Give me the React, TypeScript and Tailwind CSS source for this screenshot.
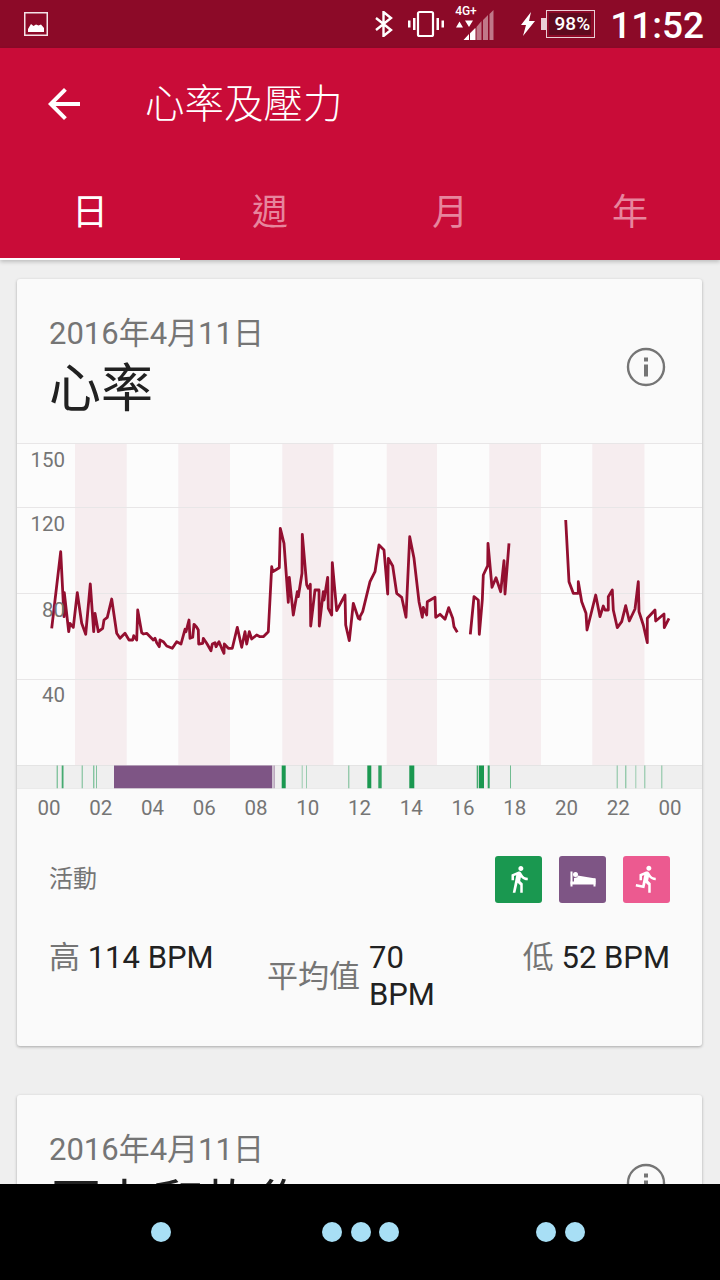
import React from "react";

const FONT = "font-['Roboto','Noto_Sans_CJK_TC',sans-serif]";

const left: number[][] = [[155,565],[182,335],[192,530],[193,458],[206,575],[210,550],[220,562],[232,458],[245,550],[257,583],[271,432],[281,575],[285,520],[295,575],[308,565],[312,540],[322,532],[335,477],[350,580],[360,595],[375,580],[387,600],[398,600],[401,587],[410,600],[413,510],[425,578],[430,582],[440,580],[460,600],[465,595],[470,608],[478,620],[480,600],[490,605],[500,618],[517,625],[530,605],[543,612],[555,568],[558,575],[567,540],[570,595],[578,592],[582,553],[590,562],[595,570],[596,612],[608,610],[610,595],[620,610],[633,632],[637,612],[645,608],[648,620],[657,605],[665,625],[672,640],[673,612],[685,625],[697,625],[712,562],[725,622],[735,575],[740,612],[748,575],[755,597],[770,585],[780,590],[790,590],[805,575],[815,380],[818,395],[838,383],[841,265],[852,310],[865,487],[868,412],[880,525],[892,455],[895,470],[906,400],[907,283],[920,435],[925,445],[931,433],[932,558],[945,450],[957,450],[958,558],[970,455],[972,480],[983,412],[985,505],[995,525],[997,368],[1010,512],[1035,465],[1037,555],[1048,602],[1060,490],[1075,535],[1080,538]];
const right1: number[][] = [[0,350],[8,335],[30,245],[45,215],[57,135],[72,150],[83,282],[85,175],[98,198],[110,280],[125,292],[138,352],[149,110],[162,175],[177,305],[187,352],[190,322],[200,345],[202,305],[225,292],[227,352],[240,343],[255,358],[266,323],[278,355],[282,380],[292,397]];
const right2: number[][] = [[331,403],[342,290],[355,300],[358,403],[367,300],[370,225],[383,197],[384,130],[396,262],[408,233],[422,275],[432,182],[435,282],[447,130]];
const right3: number[][] = [[617,60],[627,245],[640,280],[655,280],[655,245],[665,305],[678,340],[681,390],[707,285],[720,350],[730,318],[735,330],[745,330],[745,290],[757,270],[760,330],[772,383],[785,365],[797,317],[808,363],[825,327],[835,245],[837,335],[850,375],[862,428],[862,355],[885,330],[887,363],[912,342],[913,383],[927,355]];

// traced points are in zoomed reference coordinates; chart svg origin is (17,443)
const toL = (p: number[]) => `${(p[0] / 3 - 17).toFixed(1)},${(440 + p[1] / 3 - 443).toFixed(1)}`;
const toR = (p: number[]) => `${(360 + p[0] / 3 - 17).toFixed(1)},${(500 + p[1] / 3 - 443).toFixed(1)}`;
const series = [
  [...left.map(toL), ...right1.map(toR)].join(" "),
  right2.map(toR).join(" "),
  right3.map(toR).join(" "),
];

const bands = [[75, 126.7], [178.3, 230], [282.3, 333.5], [386.7, 437], [489.3, 541], [592.3, 644.5]];
const grid = [0.5, 64.5, 150.5, 236.5];

const strip: { x: number; w: number; c: string; o?: number }[] = [
  { x: 56.7, w: 1, c: "#1a9850", o: 0.7 },
  { x: 61.7, w: 1.8, c: "#1a9850", o: 0.8 },
  { x: 81.7, w: 1, c: "#1a9850", o: 0.6 },
  { x: 93.3, w: 1, c: "#1a9850", o: 0.7 },
  { x: 96, w: 1, c: "#1a9850", o: 0.5 },
  { x: 114, w: 158.3, c: "#7e5585" },
  { x: 273.3, w: 1.7, c: "#7e5585", o: 0.45 },
  { x: 281.7, w: 4, c: "#1a9850" },
  { x: 301.7, w: 1, c: "#1a9850", o: 0.4 },
  { x: 306, w: 1, c: "#1a9850", o: 0.4 },
  { x: 348.3, w: 1, c: "#1a9850", o: 0.6 },
  { x: 367.3, w: 4, c: "#1a9850" },
  { x: 378.3, w: 3.4, c: "#1a9850", o: 0.9 },
  { x: 409.3, w: 5, c: "#1a9850" },
  { x: 476.7, w: 1.6, c: "#1a9850", o: 0.8 },
  { x: 479, w: 5, c: "#1a9850" },
  { x: 487.7, w: 2, c: "#1a9850", o: 0.9 },
  { x: 510, w: 1, c: "#1a9850", o: 0.6 },
  { x: 616.7, w: 1, c: "#1a9850", o: 0.5 },
  { x: 625.3, w: 1, c: "#1a9850", o: 0.6 },
  { x: 635.3, w: 1, c: "#1a9850", o: 0.4 },
  { x: 644.3, w: 1, c: "#1a9850", o: 0.5 },
  { x: 661.3, w: 1, c: "#1a9850", o: 0.5 },
];

const hours = ["00", "02", "04", "06", "08", "10", "12", "14", "16", "18", "20", "22", "00"];

function InfoIcon() {
  return (
    <svg width="40" height="40" viewBox="0 0 40 40" className="block">
      <circle cx="20" cy="20" r="18" fill="none" stroke="#757575" strokeWidth="2.4" />
      <rect x="18" y="17.5" width="4" height="12" fill="#757575" />
      <rect x="18" y="10.5" width="4" height="4" fill="#757575" />
    </svg>
  );
}

function StatusBar() {
  return (
    <div className="h-12 bg-[#8c0a28] flex items-center pl-6 pr-4 shrink-0">
      <svg width="24" height="24" viewBox="0 0 24 24">
        <rect x="0.75" y="0.75" width="22.5" height="22.5" fill="none" stroke="#f4e3e7" strokeWidth="1.5" />
        <path d="M4 20v-3l3-5 2.5 2 2.5-1.5 2.5 1 2.5-1 3 3.5v4z" fill="#fff" />
      </svg>
      <div className="flex-1" />
      <svg width="20" height="26" viewBox="0 0 20 26" className="mr-[13px]">
        <path d="M2 7l15 12-7.5 6V1L17 7 2 19" fill="none" stroke="#fff" strokeWidth="2.4" />
      </svg>
      <svg width="38" height="28" viewBox="0 0 38 28" className="mr-[9px]">
        <rect x="11" y="2" width="15" height="24" rx="1.5" fill="none" stroke="#fff" strokeWidth="2.2" />
        <path d="M6 8h2.5v12H6zM1 10.500h2.500v7H1zM29.500 8H32v12h-2.500zM34.500 10.500H37v7h-2.500z" fill="#fff" />
      </svg>
      <div className="relative w-[40px] h-[36px] mr-[26px]">
        <svg width="40" height="36" viewBox="0 0 40 36" className="absolute left-0 top-[2px]">
          <path d="M21 20v12h-5v-7zM27.500 13v19h-5V19zM34 7v25h-5V12zM39.500 2v30h-4V6z" fill="#fff" opacity="0.45" />
          <path d="M15 26v6H9.500zM21.500 20v12H16v-6.500z" fill="#fff" />
          <path d="M2 19.500l3.500-6 3.500 6zM11 12.500h8l-4 6.500z" fill="#fff" />
        </svg>
        <span className="absolute left-[1px] top-[-1px] text-[12px] leading-[12px] font-medium text-white">4G+</span>
      </div>
      <svg width="16" height="24" viewBox="0 0 16 24" className="mr-[5px]">
        <path d="M11 0L1 13h5l-3 11 12-15H9z" fill="#fff" />
      </svg>
      <div className="w-[54px] h-[28px] mr-[15px] flex items-center">
        <div className="w-[5px] h-[12px] bg-[#e9cfd6]" />
        <div className="flex-1 h-[28px] border border-[#e9cfd6] flex items-center justify-end pr-[4px] relative">
          <div className="w-[42px] h-[22px] bg-[#5e0a1f] absolute right-[3px] top-[2px]" />
          <span className="relative text-[19px] leading-[22px] font-medium text-white">98%</span>
        </div>
      </div>
      <span className="text-[37px] leading-[48px] pt-[3px] text-white font-medium">11:52</span>
    </div>
  );
}

function Header() {
  return (
    <div className="bg-[#c90c38] shrink-0 shadow-[0_2px_4px_rgba(0,0,0,0.2)] relative z-10">
      <div className="h-[112px] flex items-center pl-10">
        <svg width="48" height="48" viewBox="0 0 24 24" className="block">
          <path d="M20 11H7.830l5.590-5.590L12 4l-8 8 8 8 1.410-1.410L7.830 13H20v-2z" fill="#fff" />
        </svg>
        <span className="ml-[57px] pt-[2px] text-[39.5px] leading-[48px] text-white font-light">心率及壓力</span>
      </div>
      <div className="h-[100px] flex">
        {["日", "週", "月", "年"].map((t, i) => (
          <div key={t} className={`flex-1 flex items-center justify-center text-[36px] pt-[8px] border-b-[2px] ${i === 0 ? "text-white border-white" : "text-[#e7859d] border-transparent"}`}>
            {t}
          </div>
        ))}
      </div>
    </div>
  );
}

function Chart() {
  return (
    <div className="relative h-[322px]">
      <svg width="685" height="322" viewBox="0 0 685 322" className="block">
        <rect width="685" height="322" fill="#fcfcfc" />
        {bands.map(([a, b]) => (
          <rect key={a} x={a - 17} y="0" width={b - a} height="322" fill="#f6edef" />
        ))}
        {grid.map((y) => (
          <line key={y} x1="0" x2="685" y1={y} y2={y} stroke="#e8e6e7" strokeWidth="1" />
        ))}
        {series.map((s, i) => (
          <polyline key={i} points={s} fill="none" stroke="#930f30" strokeWidth="2.8" strokeLinejoin="round" />
        ))}
      </svg>
      {[["150", 4], ["120", 68], ["80", 154], ["40", 239]].map(([t, top]) => (
        <span key={t} style={{ top: top + "px" }} className="absolute right-[637px] text-[20.5px] leading-[26px] text-[#757575]">
          {t}
        </span>
      ))}
    </div>
  );
}

function Strip() {
  return (
    <svg width="685" height="24" viewBox="0 0 685 24" className="block">
      <rect width="685" height="24" fill="#efefef" />
      <rect width="685" height="1" fill="#e4e4e4" />
      {strip.map((b) => (
        <rect key={b.x} x={b.x - 17} y="0.500" width={b.w} height="23" fill={b.c} opacity={b.o ?? 1} />
      ))}
      <rect y="23.500" width="685" height="0.500" fill="#e4e4e4" />
    </svg>
  );
}

function ActivityBadge({ bg, children }: { bg: string; children: React.ReactNode }) {
  return <div className={`w-[47px] h-[47px] rounded-[3px] flex items-center justify-center ${bg}`}>{children}</div>;
}

function Card1() {
  return (
    <div className="ml-[17px] mt-[19px] w-[685px] h-[767px] bg-[#fafafa] rounded-[3px] shadow-[0_1px_3px_rgba(0,0,0,0.3)] shrink-0 overflow-hidden">
      <div className="h-[164px] pl-[32px] pr-[36px] flex justify-between">
        <div className="pt-[35px]">
          <div className="text-[31px] leading-[40px] text-[#757575]">2016年4月11日</div>
          <div className="text-[52px] leading-[72px] text-[#212121]">心率</div>
        </div>
        <div className="pt-[68px]">
          <InfoIcon />
        </div>
      </div>
      <Chart />
      <Strip />
      <div className="flex justify-between pl-[20px] pr-[20px] h-[38px] items-center text-[20.5px] text-[#757575]">
        {hours.map((h, i) => (
          <span key={i} className="w-[24px] text-center">{h}</span>
        ))}
      </div>
      <div className="h-[68px] mt-[18px] flex items-center justify-between pl-[32px] pr-[32px]">
        <span className="text-[24px] text-[#757575]">活動</span>
        <div className="flex gap-[17px]">
          <ActivityBadge bg="bg-[#1a9850]">
            <svg width="30" height="30" viewBox="0 0 24 24">
              <path d="M13.500 5.500c1.100 0 2-.9 2-2s-.9-2-2-2-2 .9-2 2 .9 2 2 2zM9.800 8.900L7 23h2.100l1.800-8 2.100 2v6h2v-7.500l-2.100-2 .6-3C14.800 12 16.800 13 19 13v-2c-1.900 0-3.500-1-4.300-2.400l-1-1.600c-.4-.6-1-1-1.700-1-.3 0-.5.100-.8.100L6 8.300V13h2V9.600l1.800-.7" fill="#fff" />
            </svg>
          </ActivityBadge>
          <ActivityBadge bg="bg-[#7e5585]">
            <svg width="26" height="16" viewBox="0 0 26 16">
              <rect x="0.500" y="0.500" width="2" height="15" fill="#fff" />
              <rect x="23.500" y="7.500" width="2" height="8" fill="#fff" />
              <rect x="0.500" y="10.500" width="25" height="3" fill="#fff" />
              <circle cx="5.500" cy="3.500" r="2.500" fill="#fff" />
              <path d="M4 7l3.500-.8V4.500l18 3V11H4z" fill="#fff" />
            </svg>
          </ActivityBadge>
          <ActivityBadge bg="bg-[#ec5a90]">
            <svg width="30" height="30" viewBox="0 0 24 24">
              <path d="M13.490 5.480c1.100 0 2-.9 2-2s-.9-2-2-2-2 .9-2 2 .9 2 2 2zm-3.600 13.900l1-4.400 2.100 2v6h2v-7.500l-2.100-2 .6-3c1.300 1.500 3.300 2.500 5.500 2.500v-2c-1.900 0-3.500-1-4.300-2.400l-1-1.600c-.4-.6-1-1-1.700-1-.3 0-.5.100-.8.100l-5.200 2.200v4.700h2v-3.400l1.800-.7-1.600 8.100-4.900-1-.4 2 7 1.400z" fill="#fff" />
            </svg>
          </ActivityBadge>
        </div>
      </div>
      <div className="flex pl-[32px] pr-[32px] pt-[26px] text-[31px] leading-[37px] text-[#212121]">
        <div className="w-[218px]"><span className="text-[#757575]">高</span> 114 BPM</div>
        <div className="flex items-center gap-[9px]">
          <span className="text-[#757575] whitespace-nowrap">平均值</span>
          <span>70<br />BPM</span>
        </div>
        <div className="flex-1 text-right"><span className="text-[#757575]">低</span> 52 BPM</div>
      </div>
    </div>
  );
}

function Card2() {
  return (
    <div className="ml-[17px] mt-[49px] w-[685px] h-[300px] bg-[#fafafa] rounded-[3px] shadow-[0_1px_3px_rgba(0,0,0,0.3)] shrink-0 pl-[32px] pr-[36px] flex justify-between">
      <div className="pt-[35px]">
        <div className="text-[31px] leading-[40px] text-[#757575]">2016年4月11日</div>
        <div className="text-[52px] leading-[72px] text-[#212121]">壓力和恢復</div>
      </div>
      <div className="pt-[68px]">
        <InfoIcon />
      </div>
    </div>
  );
}

function Dot() {
  return <span className="w-[20px] h-[20px] rounded-full bg-[#a8dff5]" />;
}

export default function App() {
  return (
    <div className={`${FONT} w-[720px] h-[1280px] flex flex-col overflow-hidden bg-[#efefef]`}>
      <StatusBar />
      <Header />
      <div className="flex-1 min-h-0 overflow-hidden">
        <Card1 />
        <Card2 />
      </div>
      <div className="h-[96px] bg-black shrink-0 flex items-center pl-[151px] relative z-10">
        <Dot />
        <div className="flex gap-[8.5px] ml-[151px]"><Dot /><Dot /><Dot /></div>
        <div className="flex gap-[8.5px] ml-[137px]"><Dot /><Dot /></div>
      </div>
    </div>
  );
}
